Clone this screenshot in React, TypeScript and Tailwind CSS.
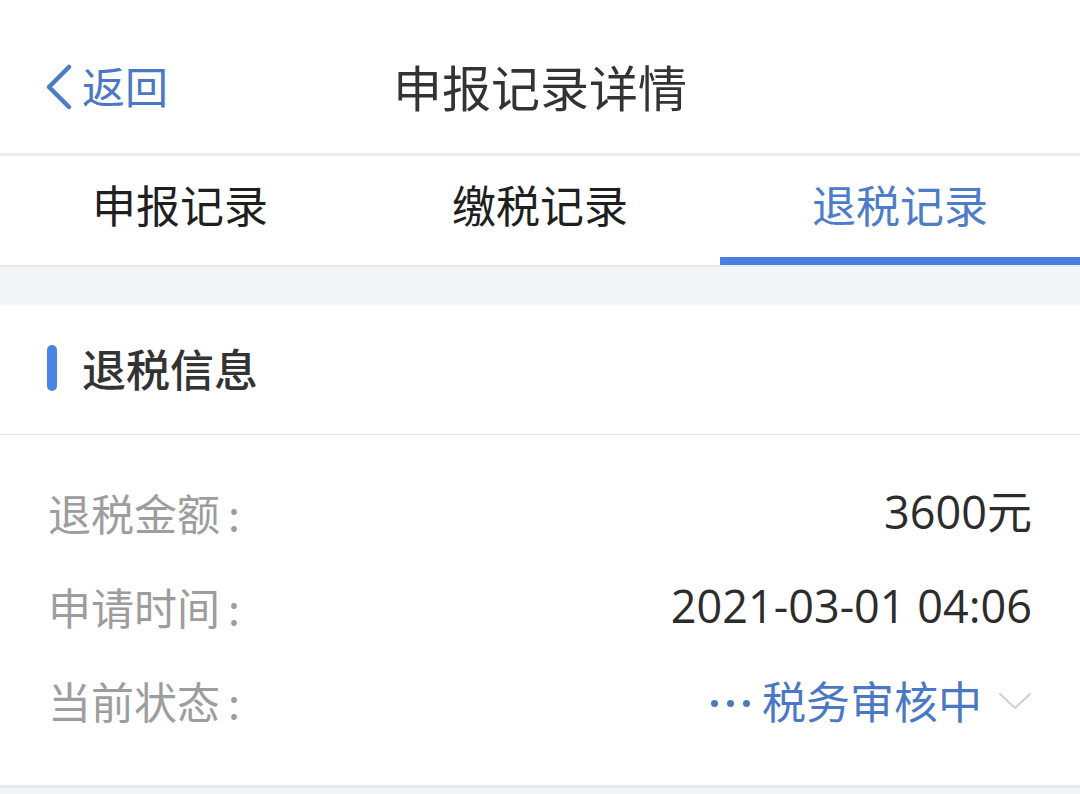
import React from "react";

const font = { fontFamily: '"Noto Sans CJK SC", "Noto Sans", sans-serif' };
const numFont = { fontFamily: '"Open Sans", "Noto Sans CJK SC", sans-serif' };

export default function App() {
  return (
    <div className="w-[1080px] h-[794px] bg-[#f4f5f9] overflow-hidden" style={font}>
      {/* Header */}
      <div className="relative h-[156px] bg-white flex items-center justify-center border-b-[3px] border-[#ececee]">
        <div className="absolute left-[44px] top-0 h-full flex items-center text-[#4a78c4] pt-[24px]">
          <svg width="30" height="46" viewBox="0 0 30 46" className="mr-[8px] mt-[-4px]">
            <path d="M25 3 L5 23 L25 43" fill="none" stroke="#4a7cc8" strokeWidth="4.5" strokeLinecap="round" strokeLinejoin="round" />
          </svg>
          <span className="text-[43px] leading-none mt-[-6px]">返回</span>
        </div>
        <span className="text-[49px] leading-none text-[#333] mt-[18px]">申报记录详情</span>
      </div>

      {/* Tabs */}
      <div className="grid grid-cols-3 h-[111px] bg-white border-b-2 border-[#e9e9ec]">
        <div className="flex items-center justify-center text-[44px] text-[#1f1f1f] pb-[14px]">申报记录</div>
        <div className="flex items-center justify-center text-[44px] text-[#1f1f1f] pb-[14px]">缴税记录</div>
        <div className="relative flex items-center justify-center text-[44px] text-[#4d7dc9] pb-[14px]">
          退税记录
          <div className="absolute left-0 right-0 bottom-0 h-[8px] bg-[#4a7fdf]" />
        </div>
      </div>

      <div className="h-[38px]" />

      {/* Card */}
      <div className="bg-white border-b-[3px] border-[#e6e7ec]">
        <div className="h-[130px] flex items-center pl-[47px] pb-[4px] border-b border-[#e2e2e4]">
          <div className="w-[10px] h-[46px] rounded-full bg-[#4c84e6] mr-[25px]" />
          <span className="text-[44px] font-medium text-[#333] leading-none">退税信息</span>
        </div>
        <div className="pt-[30px] pb-[38px] pl-[48px] pr-[48px]">
          <div className="h-[94px] flex items-center justify-between">
            <span className="text-[43px] text-[#9d9d9d]">退税金额<span className="ml-[8px]">:</span></span>
            <span className="text-[45px] text-[#2c2c2c]" style={numFont}>3600元</span>
          </div>
          <div className="h-[94px] flex items-center justify-between">
            <span className="text-[43px] text-[#9d9d9d]">申请时间<span className="ml-[8px]">:</span></span>
            <span className="text-[45px] text-[#2c2c2c]" style={numFont}>2021-03-01 04:06</span>
          </div>
          <div className="h-[94px] flex items-center justify-between">
            <span className="text-[43px] text-[#9d9d9d]">当前状态<span className="ml-[8px]">:</span></span>
            <div className="flex items-center">
              <div className="flex items-center gap-[9px] mr-[12px] mt-[6px]">
                <span className="w-[7px] h-[7px] rounded-full bg-[#4a78c4]" />
                <span className="w-[7px] h-[7px] rounded-full bg-[#4a78c4]" />
                <span className="w-[7px] h-[7px] rounded-full bg-[#4a78c4]" />
              </div>
              <span className="text-[44px] text-[#4a78c4]">税务审核中</span>
              <svg width="34" height="20" viewBox="0 0 34 20" className="ml-[16px] mt-[2px]">
                <path d="M2 3 L17 17 L32 3" fill="none" stroke="#cfcfd3" strokeWidth="2" strokeLinecap="round" strokeLinejoin="round" />
              </svg>
            </div>
          </div>
        </div>
      </div>
    </div>
  );
}
